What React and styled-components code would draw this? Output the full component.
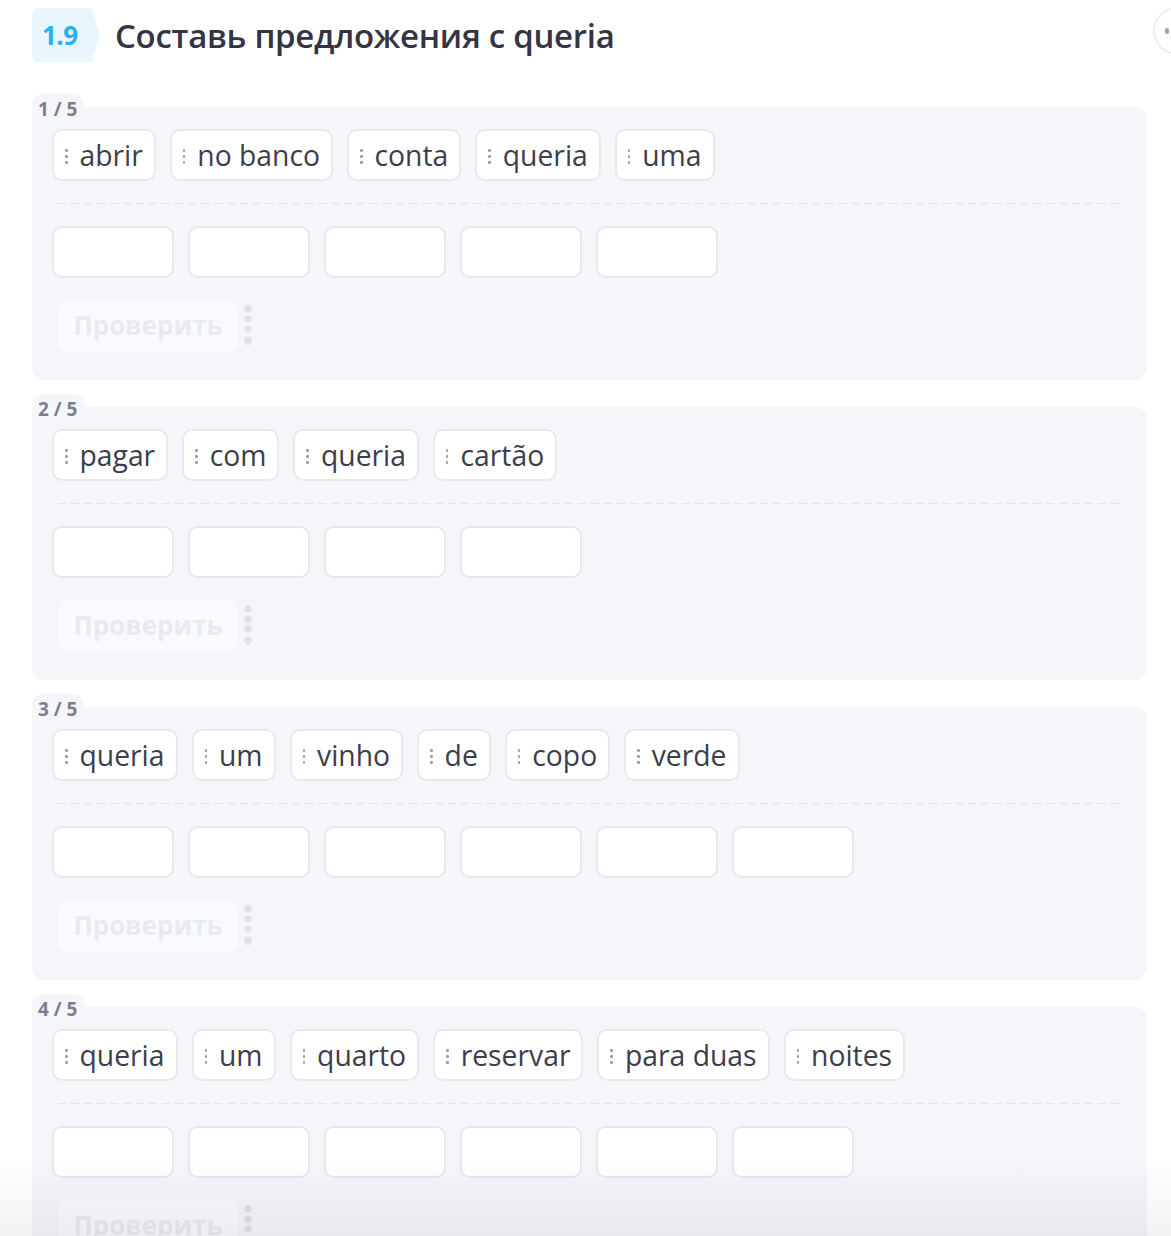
import React from "react"
import styled, { createGlobalStyle } from "styled-components"

const GlobalStyle = createGlobalStyle`
  html, body {
    margin: 0;
    padding: 0;
    background: #ffffff;
    overflow: hidden;
  }
  body {
    font-family: "Open Sans", "Noto Sans", sans-serif;
    color: #3b3b4b;
  }
`

const Page = styled.div`
  padding: 8px 24px 0 32px;
`

const Header = styled.div`
  display: flex;
  align-items: center;
  gap: 15px;
  height: 54px;
  margin-bottom: 32px;
`

const Badge = styled.div`
  width: 68px;
  height: 54px;
  box-sizing: border-box;
  padding-left: 10px;
  display: flex;
  align-items: center;
  background: #e9f6fd;
  clip-path: polygon(0 0, 88% 0, 100% 50%, 88% 100%, 0 100%);
  border-radius: 6px 0 0 6px;
  color: #27b3f0;
  font-weight: 700;
  font-size: 26px;
  letter-spacing: -0.5px;
`

const Title = styled.h1`
  margin: 0;
  font-size: 33px;
  font-weight: 600;
  color: #343443;
  letter-spacing: -0.3px;
`

const Sections = styled.div`
  display: flex;
  flex-direction: column;
  gap: 14px;
`

const Section = styled.section`
  display: flex;
  flex-direction: column;
`

const Counter = styled.div`
  align-self: flex-start;
  height: 13px;
  padding: 0 7px 0 6px;
  background: #f5f6fa;
  border-radius: 10px 10px 0 0;
  font-size: 19px;
  font-weight: 700;
  line-height: 30px;
  color: #7d7f90;
  position: relative;
  z-index: 1;
`

const Card = styled.div`
  background: #f5f6fa;
  border-radius: 0 12px 12px 12px;
  padding: 22px 20px 28px;
`

const Row = styled.div`
  display: flex;
  gap: ${(p) => p.$gap}px;
`

const Chip = styled.div`
  height: 52px;
  box-sizing: border-box;
  display: flex;
  align-items: center;
  gap: 12px;
  padding: 0 11px 0 11px;
  background: #ffffff;
  border: 2px solid #e8e9ef;
  border-radius: 10px;
  font-size: 28.3px;
  color: #3d3d4c;
`

const Handle = styled.span`
  display: flex;
  flex-direction: column;
  gap: 3.5px;
  margin-top: 3px;

  i {
    display: block;
    width: 2.5px;
    height: 2.5px;
    border-radius: 50%;
    background: #9a9cab;
  }
`

const Divider = styled.div`
  height: 1px;
  margin: 22px 5px 22px 6px;
  background: repeating-linear-gradient(
    to right,
    #e1e2ea 0 8px,
    transparent 8px 13px
  );
`

const Slot = styled.div`
  width: 122px;
  height: 52px;
  box-sizing: border-box;
  background: #ffffff;
  border: 2px solid #e7e8ee;
  border-radius: 10px;
`

const Actions = styled.div`
  display: flex;
  align-items: flex-start;
  gap: 6px;
  height: 52px;
  margin: 22px 0 0 6px;
`

const CheckButton = styled.button`
  height: 52px;
  width: 180px;
  border: none;
  border-radius: 12px;
  background: #f9fafd;
  color: #e9eaf1;
  font-family: "Open Sans", "Noto Sans", sans-serif;
  font-size: 26px;
  font-weight: 700;
  padding: 0 0 2px;
`

const More = styled.svg`
  margin-top: 4px;
`

const ScrollButton = styled.div`
  position: fixed;
  top: 7px;
  right: -30px;
  width: 44px;
  height: 44px;
  border-radius: 50%;
  border: 2px solid #eeeef3;
  background: #fff;

  &::before {
    content: "";
    position: absolute;
    left: 10px;
    top: 19px;
    width: 4px;
    height: 6px;
    border-radius: 2px;
    background: #9d9fc4;
  }
`

const BottomFade = styled.div`
  position: fixed;
  left: 0;
  right: 0;
  bottom: 0;
  height: 80px;
  pointer-events: none;
  background: linear-gradient(
    to bottom,
    rgba(40, 40, 60, 0),
    rgba(40, 40, 60, 0.06)
  );
`

const exercises = [
  { words: ["abrir", "no banco", "conta", "queria", "uma"] },
  { words: ["pagar", "com", "queria", "cartão"] },
  { words: ["queria", "um", "vinho", "de", "copo", "verde"] },
  { words: ["queria", "um", "quarto", "reservar", "para duas", "noites"] },
  { words: ["queria", "fazer", "uma", "reserva"] },
]

const MoreIcon = () => (
  <More width="10" height="48" viewBox="0 0 10 48">
    <circle cx="4" cy="5" r="3.6" fill="#dfe0e8" />
    <circle cx="4" cy="15" r="3.6" fill="#dfe0e8" />
    <circle cx="4" cy="25" r="3.6" fill="#dfe0e8" />
    <path d="M0.5 33 h7 v5 l-3.5 4 l-3.5 -4 z" fill="#dfe0e8" />
  </More>
)

const Exercise = ({ index, total, words }) => (
  <Section>
    <Counter>
      {index} / {total}
    </Counter>
    <Card>
      <Row $gap={14}>
        {words.map((w, i) => (
          <Chip key={i}>
            <Handle>
              <i />
              <i />
              <i />
            </Handle>
            {w}
          </Chip>
        ))}
      </Row>
      <Divider />
      <Row $gap={14}>
        {words.map((_, i) => (
          <Slot key={i} />
        ))}
      </Row>
      <Actions>
        <CheckButton>Проверить</CheckButton>
        <MoreIcon />
      </Actions>
    </Card>
  </Section>
)

export default function App() {
  return (
    <>
      <GlobalStyle />
      <Page>
        <Header>
          <Badge>1.9</Badge>
          <Title>Составь предложения с queria</Title>
        </Header>
        <Sections>
          {exercises.map((ex, i) => (
            <Exercise
              key={i}
              index={i + 1}
              total={exercises.length}
              words={ex.words}
            />
          ))}
        </Sections>
      </Page>
      <ScrollButton />
      <BottomFade />
    </>
  )
}
